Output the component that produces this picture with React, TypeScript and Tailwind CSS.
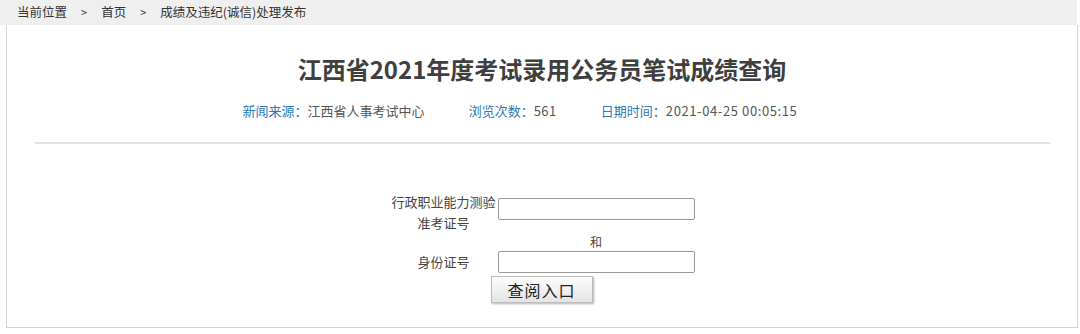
export default function App() {
    const font = { fontFamily: '"Microsoft YaHei", "Noto Sans CJK SC", "Liberation Sans", sans-serif' };

    return (
        <div className="w-[1080px] h-[334px] bg-white text-[#333]" style={font}>
            {/* Breadcrumb */}
            <div className="w-[1077px] h-[25px] bg-[#efefef] flex items-center pl-[17px] text-[12.5px] text-[#333]">
                <span>当前位置</span>
                <span className="mx-[14px] text-[11px]">&gt;</span>
                <span>首页</span>
                <span className="mx-[14px] text-[11px]">&gt;</span>
                <span>成绩及违纪(诚信)处理发布</span>
            </div>

            {/* Content */}
            <div className="ml-[6px] w-[1072px] h-[303px] border-l border-r border-b border-[#d4d4d4] flex flex-col items-center">
                <h1 className="mt-[28px] h-[32px] leading-[32px] text-[24px] font-bold text-[#3f3f3f]">
                    江西省2021年度考试录用公务员笔试成绩查询
                </h1>
                <div className="mt-[18px] mr-[44px] flex items-center text-[13px] leading-[16px]">
                    <span className="text-[#2b79b6]">新闻来源：</span>
                    <span className="text-[#555]">江西省人事考试中心</span>
                    <span className="ml-[44px] text-[#2b79b6]">浏览次数：</span>
                    <span className="text-[#555] tracking-[0.5px]">561</span>
                    <span className="ml-[44px] text-[#2b79b6]">日期时间：</span>
                    <span className="text-[#555] tracking-[0.6px]">2021-04-25 00:05:15</span>
                </div>
                <div className="mt-[23px] w-[1015px] h-[2px] bg-[#e2e2e2]" />

                {/* Form */}
                <div className="mt-[47px] flex flex-col text-[13px] text-[#444]">
                    <div className="flex items-start">
                        <div className="w-[108px] text-center leading-[21px]">行政职业能力测验<br />准考证号</div>
                        <input className="mt-[7px] w-[197px] h-[22px] border border-[#999] rounded-[2px] bg-white" />
                    </div>
                    <div className="flex">
                        <div className="w-[108px]" />
                        <div className="w-[197px] text-center leading-[14px] text-[12px] mt-[2px]">和</div>
                    </div>
                    <div className="mt-[2px] flex items-center">
                        <div className="w-[108px] text-center">身份证号</div>
                        <input className="w-[197px] h-[22px] border border-[#999] rounded-[2px] bg-white" />
                    </div>
                    <div className="flex mt-[3px]">
                        <div className="w-[101px]" />
                        <button className="w-[102px] h-[27px] border border-[#bbb] bg-gradient-to-b from-[#fdfdfd] to-[#e4e4e4] shadow-[1px_1px_2px_rgba(0,0,0,0.3)] text-[16px] text-[#222] tracking-[1px]">
                            查阅入口
                        </button>
                    </div>
                </div>
            </div>
        </div>
    );
}
